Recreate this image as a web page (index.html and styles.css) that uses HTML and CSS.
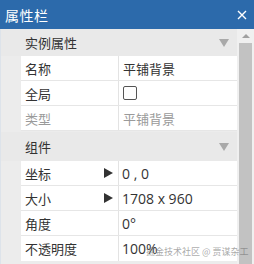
FILE: index.html
```html
<!DOCTYPE html>
<html lang="zh">
<head>
    <meta charset="UTF-8">
    <title>属性栏</title>
    <link rel="stylesheet" href="styles.css">
</head>
<body>
    <div class="panel">
        <div class="titlebar">
            <span class="title">属性栏</span>
            <svg class="close" width="10" height="10" viewBox="0 0 10 10">
                <path d="M1 1 L9 9 M9 1 L1 9" stroke="white" stroke-width="1.4" fill="none"/>
            </svg>
        </div>
        <div class="content">
            <div class="grid">
                <div class="section first">
                    <span>实例属性</span>
                    <span class="fold"></span>
                </div>
                <div class="row">
                    <div class="label">名称</div>
                    <div class="value">平铺背景</div>
                </div>
                <div class="row">
                    <div class="label">全局</div>
                    <div class="value"><span class="check"></span></div>
                </div>
                <div class="row disabled">
                    <div class="label">类型</div>
                    <div class="value">平铺背景</div>
                </div>

                <div class="section">
                    <span>组件</span>
                    <span class="fold"></span>
                </div>
                <div class="row">
                    <div class="label">坐标<span class="expand"></span></div>
                    <div class="value num">0 , 0</div>
                </div>
                <div class="row">
                    <div class="label">大小<span class="expand"></span></div>
                    <div class="value num">1708 x 960</div>
                </div>
                <div class="row">
                    <div class="label">角度</div>
                    <div class="value num">0°</div>
                </div>
                <div class="row">
                    <div class="label">不透明度</div>
                    <div class="value num">100%</div>
                </div>
            </div>
            <div class="scrollbar">
                <span class="up"></span>
                <div class="thumb"></div>
            </div>
        </div>
        <div class="watermark">掘金技术社区 @ 贾谋杂工</div>
    </div>
</body>
</html>
```

FILE: styles.css
```css
body {
    margin: 0;
    font-family: "Noto Sans CJK SC", sans-serif;
    font-size: 13px;
    color: #333;
    background-color: #ececec;
}

.panel {
    position: relative;
    width: 254px;
    height: 264px;
    overflow: hidden;
    display: flex;
    flex-direction: column;
}

.titlebar {
    height: 29px;
    flex-shrink: 0;
    background-color: #2c6aab;
    color: white;
    display: flex;
    align-items: center;
    justify-content: space-between;
    padding: 0 7px 0 5px;
}

.title {
    font-size: 14px;
    letter-spacing: 0.5px;
}

.close {
    margin-top: 1px;
}

.content {
    flex: 1;
    display: flex;
    min-height: 0;
}

.grid {
    flex: 1;
    background-color: #ececec;
    border-left: 1px solid #dde3ea;
}

.section {
    height: 29px;
    display: flex;
    align-items: center;
    justify-content: space-between;
    padding: 0 8px 0 24px;
    background-color: #e9e9e9;
    margin-top: 1px;
}

.section.first {
    height: 27px;
    margin-top: 0;
}

.fold {
    width: 0;
    height: 0;
    border-left: 5px solid transparent;
    border-right: 5px solid transparent;
    border-top: 8px solid #a9a9a9;
}

.row {
    display: flex;
    height: 25px;
    margin-left: 20px;
    background-color: white;
    border-bottom: 1px solid #e6e6e6;
    box-sizing: border-box;
}

.row:last-child {
    border-bottom: none;
}

.label {
    width: 98px;
    display: flex;
    align-items: center;
    justify-content: space-between;
    padding: 0 5px 0 4px;
    border-right: 1px solid #e3e3e3;
    box-sizing: border-box;
}

.expand {
    width: 0;
    height: 0;
    border-top: 5px solid transparent;
    border-bottom: 5px solid transparent;
    border-left: 9px solid #333;
}

.value {
    flex: 1;
    display: flex;
    align-items: center;
    padding-left: 4px;
}

.value.num {
    font-family: "Open Sans", sans-serif;
    font-size: 14px;
    padding-left: 3px;
}

.disabled {
    color: #9a9a9a;
}

.check {
    width: 12px;
    height: 12px;
    border: 1px solid #555;
    border-radius: 2px;
}

.scrollbar {
    width: 17px;
    flex-shrink: 0;
    background-color: #f0f0f0;
    display: flex;
    flex-direction: column;
    align-items: center;
}

.up {
    width: 0;
    height: 0;
    margin-top: 5px;
    border-left: 4px solid transparent;
    border-right: 4px solid transparent;
    border-bottom: 4px solid #a0a0a0;
}

.thumb {
    width: 13px;
    flex: 1;
    margin-top: 5px;
    background-color: #c2c2c2;
}

.watermark {
    position: absolute;
    left: 146px;
    top: 246px;
    font-size: 9px;
    line-height: 12px;
    white-space: nowrap;
    color: rgba(110, 110, 110, 0.6);
}
```
